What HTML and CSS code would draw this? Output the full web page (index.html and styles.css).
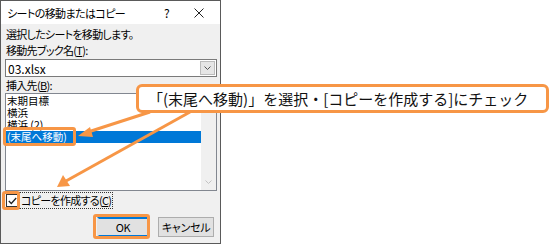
FILE: index.html
```html
<!DOCTYPE html>
<html lang="ja">
<head>
  <meta charset="UTF-8">
  <title>シートの移動またはコピー</title>
  <link rel="stylesheet" href="styles.css">
</head>
<body>
  <div class="page">
    <div class="dialog">
      <div class="titlebar">
        <span class="title">シートの移動またはコピー</span>
        <span class="help">?</span>
        <svg class="close" width="10" height="10" viewBox="0 0 10 10"><path d="M0.5 0.5L9.5 9.5M9.5 0.5L0.5 9.5" stroke="#222" stroke-width="1"/></svg>
      </div>
      <div class="content">
        <p class="msg">選択したシートを移動します。</p>
        <p class="label">移動先ブック名(<u>T</u>):</p>
        <div class="combo">
          <span class="combo-text">03.xlsx</span>
          <span class="drop">
            <svg width="7" height="4" viewBox="0 0 7 4"><path d="M0.5 0.5L3.5 3.5L6.5 0.5" stroke="#555" fill="none"/></svg>
          </span>
        </div>
        <p class="label label2">挿入先(<u>B</u>):</p>
        <div class="list">
          <ul class="items">
            <li>末期目標</li>
            <li>横浜</li>
            <li>横浜 (2)</li>
            <li class="selected">(末尾へ移動)</li>
          </ul>
          <div class="scroll">
            <svg width="7" height="4" viewBox="0 0 7 4"><path d="M0.5 3.5L3.5 0.5L6.5 3.5" stroke="#c2c2c2" fill="none"/></svg>
            <svg width="7" height="4" viewBox="0 0 7 4"><path d="M0.5 0.5L3.5 3.5L6.5 0.5" stroke="#c2c2c2" fill="none"/></svg>
          </div>
        </div>
        <div class="check">
          <span class="box">
            <svg width="9" height="8" viewBox="0 0 9 8"><path d="M0.8 4L3.3 6.5L8.2 1" stroke="#222" stroke-width="1.3" fill="none"/></svg>
          </span>
          <span class="check-label">コピーを作成する(<u>C</u>)</span>
        </div>
        <div class="buttons">
          <span class="btn btn-ok">OK</span>
          <span class="btn btn-cancel">キャンセル</span>
        </div>
      </div>
    </div>

    <div class="hl hl-item"></div>
    <div class="hl hl-check"></div>
    <div class="hl hl-ok"></div>

    <svg class="arrows" width="550" height="244" viewBox="0 0 550 244">
      <line x1="150" y1="112" x2="88" y2="132" stroke="#f79646" stroke-width="3"/>
      <polygon points="78,136 90,127 93,137" fill="#f79646"/>
      <line x1="190" y1="112" x2="66" y2="181" stroke="#f79646" stroke-width="3"/>
      <polygon points="57,187 63,175 70,186" fill="#f79646"/>
    </svg>

    <div class="callout">「(末尾へ移動)」を選択・[コピーを作成する]にチェック</div>
  </div>
</body>
</html>
```

FILE: styles.css
```css
body {
  margin: 0;
  background: #fff;
  font-family: "Noto Sans CJK JP", sans-serif;
  color: #000;
}
.page {
  position: relative;
  width: 550px;
  height: 244px;
  overflow: hidden;
}
.dialog {
  width: 221px;
  height: 244px;
  box-sizing: border-box;
  border: 1px solid #5a5a5a;
  background: #f0f0f0;
  display: flex;
  flex-direction: column;
}
.titlebar {
  height: 23px;
  background: #fff;
  display: flex;
  align-items: center;
  padding-left: 6px;
  font-size: 11px;
  letter-spacing: -0.6px;
  font-feature-settings: "palt";
}
.title {
  flex: 1;
}
.help {
  width: 10px;
  font-size: 12px;
  margin-right: 20px;
}
.close {
  margin-right: 16px;
}
.content {
  padding: 3px 0 0 4px;
  font-size: 11px;
  letter-spacing: -0.7px;
  font-feature-settings: "palt";
  display: flex;
  flex-direction: column;
}
.msg, .label {
  margin: 0 0 0 1px;
  height: 14px;
  line-height: 14px;
}
.label {
  margin-top: 2px;
}
.label2 {
  margin-top: 2px;
  height: 13px;
  line-height: 13px;
}
u {
  text-decoration-thickness: 1px;
  text-underline-offset: 1px;
}
.combo {
  margin-top: 2px;
  width: 212px;
  height: 18px;
  box-sizing: border-box;
  border: 1px solid #7a7a7a;
  background: #fff;
  display: flex;
  align-items: center;
}
.combo-text {
  flex: 1;
  padding-left: 2px;
  font-size: 12px;
  letter-spacing: 0;
}
.drop {
  width: 15px;
  height: 14px;
  margin-right: 1px;
  box-sizing: border-box;
  border: 1px solid #bcbcbc;
  background: #e6e6e6;
  display: flex;
  align-items: center;
  justify-content: center;
}
.list {
  margin-top: 1px;
  width: 212px;
  height: 98px;
  box-sizing: border-box;
  border: 1px solid #828790;
  background: #fff;
  display: flex;
  padding: 1px 0 0 0;
}
.items {
  flex: 1;
  margin: 0;
  padding: 0;
  list-style: none;
}
.items li {
  height: 12px;
  line-height: 12px;
  padding-left: 1px;
  font-size: 10.5px;
  letter-spacing: 0;
}
.items li.selected {
  background: #0078d7;
  color: #fff;
}
.scroll {
  width: 15px;
  margin-top: -1px;
  background: #f0f0f0;
  display: flex;
  flex-direction: column;
  justify-content: space-between;
  align-items: center;
  padding: 6px 0 6px;
}
.check {
  margin-top: 1px;
  height: 17px;
  display: flex;
  align-items: center;
}
.box {
  width: 13px;
  height: 13px;
  box-sizing: border-box;
  border: 1px solid #333;
  background: #fff;
  display: flex;
  align-items: center;
  justify-content: center;
  margin-left: 1px;
}
.check-label {
  margin-left: 1px;
  padding: 0 1px;
  height: 15px;
  line-height: 15px;
  outline: 1px dotted #333;
}
.buttons {
  margin-top: 8px;
  display: flex;
  justify-content: flex-end;
  gap: 9px;
  padding-right: 6px;
}
.btn {
  height: 20px;
  box-sizing: border-box;
  border: 1px solid #adadad;
  background: #e1e1e1;
  display: flex;
  align-items: center;
  justify-content: center;
  font-size: 11px;
  letter-spacing: -0.3px;
}
.btn-ok {
  width: 52px;
  border: 2px solid #0078d7;
  border-left-color: #e1e1e1;
  border-right-color: #e1e1e1;
}
.btn-cancel {
  width: 56px;
}
.hl {
  position: absolute;
  box-sizing: border-box;
  border: 3px solid #f79646;
  border-radius: 3px;
}
.hl-item {
  left: 3px;
  top: 127px;
  width: 73px;
  height: 19px;
}
.hl-check {
  left: 2px;
  top: 191px;
  width: 18px;
  height: 19px;
}
.hl-ok {
  left: 93px;
  top: 214px;
  width: 57px;
  height: 25px;
}
.arrows {
  position: absolute;
  left: 0;
  top: 0;
}
.callout {
  position: absolute;
  left: 136px;
  top: 84px;
  width: 413px;
  height: 29px;
  box-sizing: border-box;
  border: 3px solid #f79646;
  border-radius: 6px;
  background: #fff;
  font-size: 15px;
  line-height: 23px;
  padding-left: 9px;
  color: #111;
}
```
